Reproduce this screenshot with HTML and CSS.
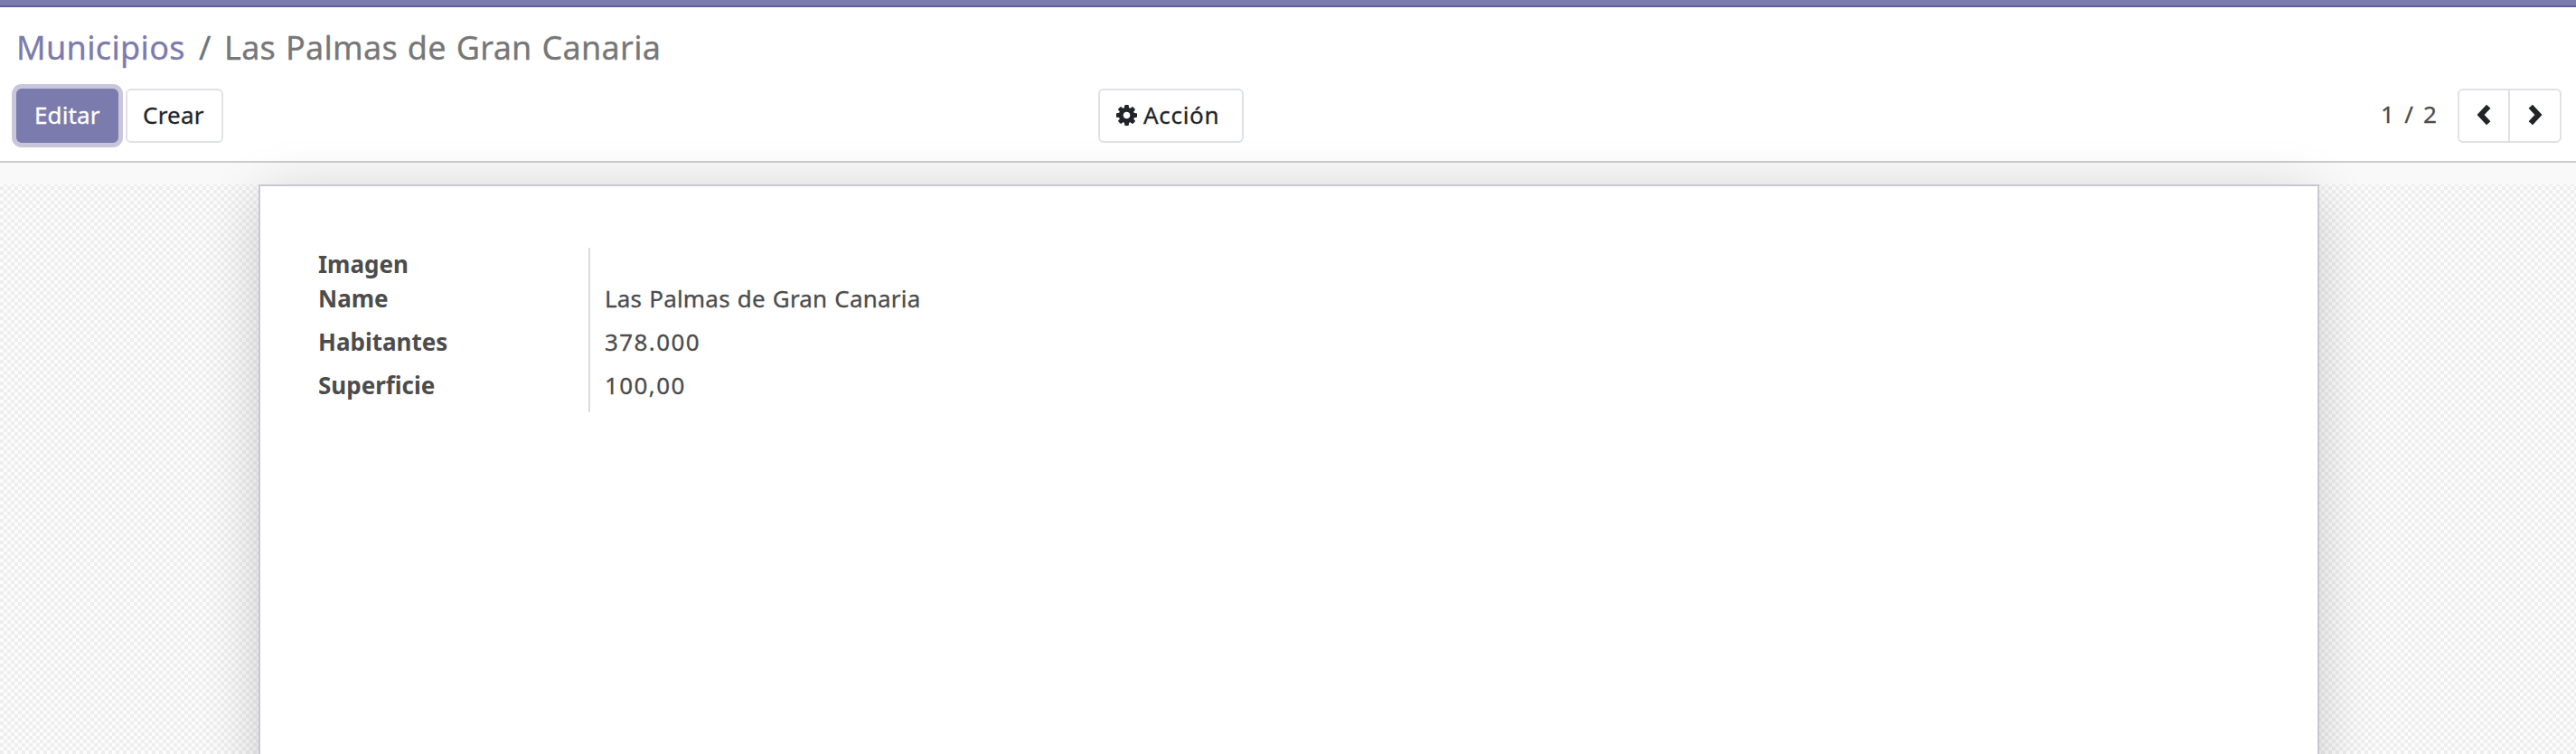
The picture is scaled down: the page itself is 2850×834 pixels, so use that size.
FILE: index.html
```html
<!DOCTYPE html>
<html lang="es">
<head>
<meta charset="utf-8">
<title>Municipios</title>
<link rel="stylesheet" href="styles.css">
</head>
<body>
<div class="navbar"></div>
<header class="control-panel">
  <nav class="breadcrumb"><a class="crumb-link">Municipios</a><span class="crumb-sep">/</span><span class="crumb-current">Las Palmas de Gran Canaria</span></nav>
  <div class="toolbar">
    <div class="buttons">
      <button class="btn btn-primary">Editar</button>
      <button class="btn btn-create">Crear</button>
    </div>
    <button class="btn btn-action">
      <svg class="gear" viewBox="0 0 1536 1536"><path fill="currentColor" d="M1024 768q0-106-75-181t-181-75-181 75-75 181 75 181 181 75 181-75 75-181zm512-109v222q0 12-8 23t-20 13l-185 28q-19 54-39 91 35 50 107 138 10 12 10 25t-9 23q-27 37-99 108t-94 71q-12 0-26-9l-138-108q-44 23-91 38-16 136-29 186-7 28-36 28H657q-14 0-24.500-8.500T621 1506l-28-184q-49-16-90-37l-141 107q-10 9-25 9-14 0-25-11-126-114-165-168-7-10-7-23 0-12 8-23 15-21 51-66.500t54-70.500q-27-50-41-99L29 913q-13-2-21-12.500T0 877V655q0-12 8-23t19-13l186-28q14-46 39-92-40-57-107-138-10-12-10-24 0-10 9-23 26-36 98.500-107.500T337 135q13 0 26 10l138 107q44-23 91-38 16-136 29-186 7-28 36-28h222q14 0 24.500 8.500T915 30l28 184q49 16 90 37l142-107q9-9 24-9 13 0 25 10 129 119 165 170 7 8 7 22 0 12-8 23-15 21-51 66.500t-54 70.500q26 50 41 98l183 28q13 2 21 12.500t8 23.500z"/></svg>
      <span class="action-text">Acción</span>
    </button>
    <div class="pager">
      <span class="counter">1 / 2</span>
      <div class="pager-buttons">
        <button class="btn btn-prev"><svg class="chevron" viewBox="0 0 16 24"><path d="M13.200 2.800 4.600 12l8.600 9.200"/></svg></button>
        <button class="btn btn-next"><svg class="chevron" viewBox="0 0 16 24"><path d="M2.800 2.800 11.400 12l-8.600 9.200"/></svg></button>
      </div>
    </div>
  </div>
</header>
<main class="content">
  <section class="sheet">
    <div class="group">
      <div class="labels">
        <div class="label first">Imagen</div>
        <div class="label">Name</div>
        <div class="label">Habitantes</div>
        <div class="label">Superficie</div>
      </div>
      <div class="values">
        <div class="value first"></div>
        <div class="value">Las Palmas de Gran Canaria</div>
        <div class="value number">378.000</div>
        <div class="value number">100,00</div>
      </div>
    </div>
  </section>
</main>
</body>
</html>
```
FILE: styles.css
```css
* { box-sizing: border-box; }
body { margin: 0; height: 834px; overflow: hidden; display: flex; flex-direction: column; background: #f9f9f9; color: #4c4c4c; font: 26px/40px "Noto Sans", sans-serif; -webkit-text-stroke: .3px currentColor; }
.navbar { height: 8px; flex: none; background: #7c7bad; border-bottom: 2px solid #5f5e97; }
.control-panel { height: 172px; flex: none; background: #fff; border-bottom: 2px solid #ccc; padding: 18px 16px 0 18px; display: flex; flex-direction: column; }
.breadcrumb { height: 54px; line-height: 54px; font-size: 36px; display: flex; white-space: pre; }
.crumb-link { color: #7c7bad; width: 202px; letter-spacing: .35px; }
.crumb-sep { color: #6c757d; width: 28px; }
.crumb-current { color: #777; letter-spacing: .28px; word-spacing: 1.2px; }
.toolbar { height: 60px; margin-top: 18px; display: grid; grid-template-columns: 1197px 1fr auto; }
.buttons { display: flex; gap: 8px; }
.btn { height: 60px; padding: 0 0 2px; margin: 0; display: flex; align-items: center; font: inherit; color: #212529; background: #fff; border: 2px solid #dee2e6; border-radius: 6px; white-space: nowrap; }
.btn-primary { width: 113px; padding-left: 18px; color: #fff; background: #7c7bad; border-color: #7c7bad; box-shadow: 0 0 0 5px #c7c6db; letter-spacing: .1px; }
.btn-create { width: 108px; padding-left: 17px; letter-spacing: .2px; }
.btn-action { width: 161px; padding-left: 18px; gap: 7px; }
.action-text { letter-spacing: .7px; }
.gear { width: 23px; height: 23px; flex: none; }
.pager { display: flex; }
.counter { width: 85px; line-height: 56px; white-space: nowrap; letter-spacing: .5px; word-spacing: 3.500px; }
.pager-buttons { display: flex; }
.pager-buttons .btn { justify-content: center; }
.btn-prev { width: 56px; border-radius: 6px 0 0 6px; border-right: 0; }
.btn-next { width: 59px; border-radius: 0 6px 6px 0; }
.chevron { width: 16px; height: 24px; fill: none; stroke: currentColor; stroke-width: 6; }
.content { flex: 1; min-height: 0; margin-top: 24px; padding: 0 284px 0 286px; background: conic-gradient(#eee 25%, #fcfcfc 0 50%, #eee 0 75%, #fcfcfc 0) 0 -2px / 8px 8px; }
.sheet { height: 700px; background: #fff; border: 2px solid #c8c7d3; box-shadow: 0 10px 60px -4px rgba(0,0,0,.2); padding: 68px 64px; }
.group { display: flex; height: 182px; }
.labels { width: 299px; font-weight: 700; -webkit-text-stroke: 0; }
.values { border-left: 2px solid #ddd; padding-left: 16px; letter-spacing: .2px; word-spacing: 1px; }
.number { letter-spacing: 1.400px; }
.label, .value { height: 48px; line-height: 36px; white-space: nowrap; }
.first { height: 38px; }
```
